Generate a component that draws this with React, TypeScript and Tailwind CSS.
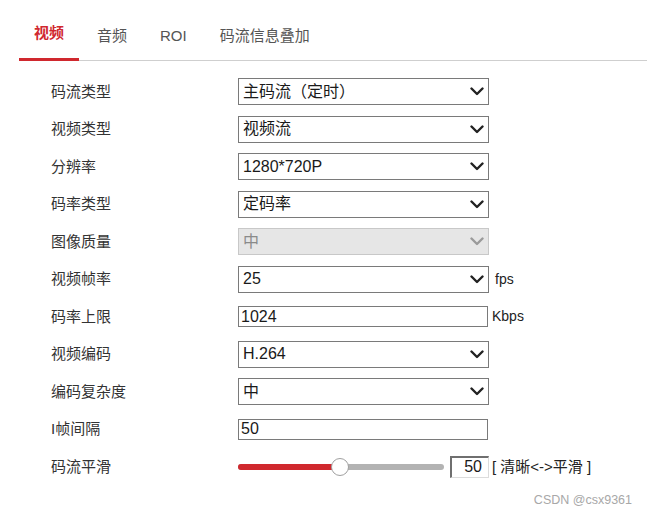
import React from "react";

const FONT = { fontFamily: '"Liberation Sans", Arial, "Noto Sans CJK SC", sans-serif' };

function Chevron({ disabled }: { disabled?: boolean }) {
  return (
    <svg width="14" height="9" viewBox="0 0 14 9" className="shrink-0">
      <path
        d="M1.5 1.5 L7 7 L12.5 1.5"
        fill="none"
        stroke={disabled ? "#9a9a9a" : "#222"}
        strokeWidth="2.4"
        strokeLinecap="round"
        strokeLinejoin="round"
      />
    </svg>
  );
}

function Select({ value, disabled }: { value: string; disabled?: boolean }) {
  return (
    <div
      className={
        disabled
          ? "w-[251px] h-[27px] border border-[#c8c8c8] bg-[#e6e6e6] flex items-center justify-between pl-[4px] pr-[4px] text-[16px] text-[#8a8a8a]"
          : "w-[251px] h-[27px] border border-[#7a7a7a] bg-white flex items-center justify-between pl-[4px] pr-[4px] text-[16px] text-[#1a1a1a]"
      }
    >
      <span className="leading-none">{value}</span>
      <Chevron disabled={disabled} />
    </div>
  );
}

function Input({ value }: { value: string }) {
  return (
    <div className="w-[250px] h-[21px] border border-[#7a7a7a] bg-white flex items-center pl-[2px] text-[16px] text-[#1a1a1a]">
      <span className="leading-none">{value}</span>
    </div>
  );
}

function Row({ label, children }: { label: string; children: React.ReactNode }) {
  return (
    <div className="h-[37.5px] flex items-center">
      <div className="w-[238px] pl-[51px] text-[15px] text-[#333] shrink-0">{label}</div>
      <div className="flex items-center">{children}</div>
    </div>
  );
}

export default function App() {
  const tabs = ["视频", "音频", "ROI", "码流信息叠加"];
  return (
    <div className="relative w-[647px] h-[518px] bg-white overflow-hidden" style={FONT}>
      <div className="ml-[19px] flex h-[61px] border-b border-[#cfcfcf] gap-[3px]">
        {tabs.map((t, i) =>
          i === 0 ? (
            <div
              key={t}
              className="h-[61px] -mb-px px-[15px] pt-[9px] flex items-center border-b-[3px] border-[#d0282e] text-[15px] font-bold text-[#d0282e]"
            >
              {t}
            </div>
          ) : (
            <div key={t} className="h-[61px] px-[15px] pt-[11px] flex items-center text-[15px] text-[#555]">
              {t}
            </div>
          )
        )}
      </div>
      <div className="mt-[12px] flex flex-col">
        <Row label="码流类型">
          <Select value="主码流（定时）" />
        </Row>
        <Row label="视频类型">
          <Select value="视频流" />
        </Row>
        <Row label="分辨率">
          <Select value="1280*720P" />
        </Row>
        <Row label="码率类型">
          <Select value="定码率" />
        </Row>
        <Row label="图像质量">
          <Select value="中" disabled />
        </Row>
        <Row label="视频帧率">
          <Select value="25" />
          <span className="ml-[6px] text-[14px] text-[#222]">fps</span>
        </Row>
        <Row label="码率上限">
          <Input value="1024" />
          <span className="ml-[4px] text-[14px] text-[#222]">Kbps</span>
        </Row>
        <Row label="视频编码">
          <Select value="H.264" />
        </Row>
        <Row label="编码复杂度">
          <Select value="中" />
        </Row>
        <Row label="I帧间隔">
          <Input value="50" />
        </Row>
        <Row label="码流平滑">
          <div className="relative w-[206px] h-[20px] flex items-center">
            <div className="w-full h-[6px] rounded-full bg-[#b3b3b3] flex">
              <div className="w-[102px] h-[6px] rounded-full bg-[#d0282e]" />
            </div>
            <div className="absolute left-[93px] top-[1px] w-[18px] h-[18px] rounded-full bg-white border border-[#a0a0a0]" />
          </div>
          <div className="ml-[6px] w-[39px] h-[22px] border-t-2 border-l-2 border-b border-r border-t-[#6f6f6f] border-l-[#6f6f6f] border-b-[#dcdcdc] border-r-[#dcdcdc] flex items-center justify-end pr-[6px] text-[16px] text-[#1a1a1a]">
            50
          </div>
          <span className="ml-[3px] text-[15px] text-[#222]">[ 清晰&lt;-&gt;平滑 ]</span>
        </Row>
      </div>
      <div className="absolute right-[15px] bottom-[8px] text-[12.5px] text-[#a8a8a8]">CSDN @csx9361</div>
    </div>
  );
}
